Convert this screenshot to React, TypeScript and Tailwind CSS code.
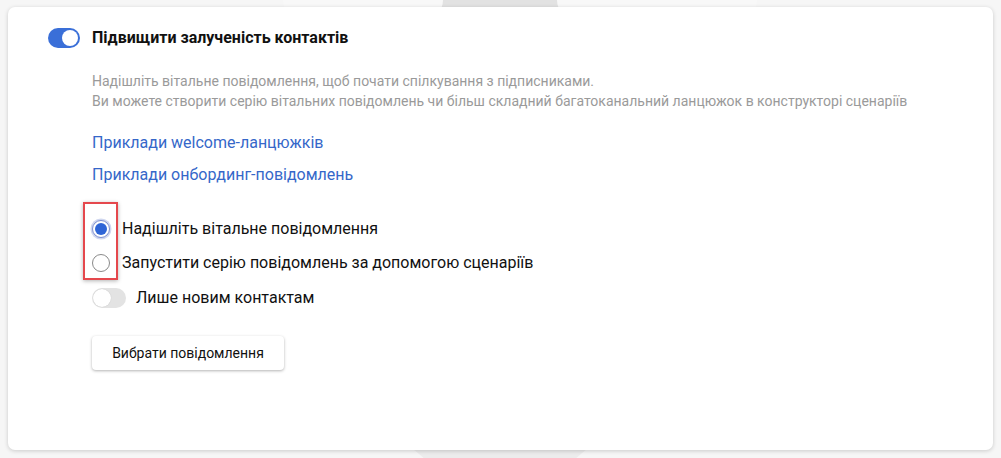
export default function App() {
  return (
    <div className="relative w-[1001px] h-[458px] overflow-hidden bg-[#f6f6f6] font-['Roboto',sans-serif]">
      {/* background decorations behind the card */}
      <div className="absolute left-[440px] top-0 w-[120px] h-[10px] bg-[#e2e2e2]" />
      <div className="absolute left-[283px] -top-[20px] w-[160px] h-[40px] rounded-[24px] bg-[#f8f8f8]" />
      <div className="absolute left-[557px] -top-[20px] w-[200px] h-[40px] rounded-[24px] bg-[#f8f8f8]" />
      <div className="absolute left-[412px] top-[448px] w-[176px] h-[12px] bg-[#ececec] [clip-path:polygon(0_0,100%_0,92%_100%,8%_100%)]" />

      <div className="relative mx-[8px] mt-[7px] h-[443px] rounded-[7px] bg-white shadow-[0_1px_4px_rgba(0,0,0,0.18)] pl-[40px] pt-[21px]">
        <div className="flex items-center gap-[12px]">
          <div className="relative w-[32px] h-[20px] rounded-full bg-[#3a6fd8]">
            <div className="absolute right-[2px] top-[2px] w-[16px] h-[16px] rounded-full bg-white" />
          </div>
          <span className="text-[16px] leading-[20px] font-bold text-[#111]">Підвищити залученість контактів</span>
        </div>

        <div className="pl-[44px]">
          <div className="mt-[23px] text-[14px] leading-[20px] text-[#9a9a9a]">
            <div>Надішліть вітальне повідомлення, щоб почати спілкування з підписниками.</div>
            <div>Ви можете створити серію вітальних повідомлень чи більш складний багатоканальний ланцюжок в конструкторі сценаріїв</div>
          </div>

          <div className="mt-[22px] flex flex-col gap-[12px] text-[16px] leading-[20px] text-[#3567c9]">
            <a>Приклади welcome-ланцюжків</a>
            <a>Приклади онбординг-повідомлень</a>
          </div>

          <div className="relative mt-[34px] flex flex-col gap-[14px]">
            <div className="absolute -left-[9px] -top-[17px] w-[35px] h-[78px] border-2 border-[#e5484d] shadow-[0_1px_4px_rgba(0,0,0,0.3)]" />
            <label className="flex items-center gap-[12px] text-[16px] leading-[20px] text-[#111]">
              <span className="flex items-center justify-center w-[18px] h-[18px] rounded-full border border-[#7d8fcf] bg-white shadow-[0_0_0_1.5px_rgba(120,140,210,0.35)]">
                <span className="w-[12px] h-[12px] rounded-full bg-[#2f65d6]" />
              </span>
              Надішліть вітальне повідомлення
            </label>
            <label className="flex items-center gap-[12px] text-[16px] leading-[20px] text-[#111]">
              <span className="w-[18px] h-[18px] rounded-full border border-[#8a8a8a] bg-white" />
              Запустити серію повідомлень за допомогою сценаріїв
            </label>
          </div>

          <div className="mt-[15px] flex items-center gap-[10px]">
            <div className="relative w-[34px] h-[20px] rounded-full bg-[#e3e3e3]">
              <div className="absolute left-[1px] top-[1px] w-[18px] h-[18px] rounded-full bg-white shadow-[0_0_1px_rgba(0,0,0,0.2)]" />
            </div>
            <span className="text-[16px] leading-[20px] text-[#111]">Лише новим контактам</span>
          </div>

          <button className="mt-[28px] w-[192px] h-[34px] rounded-[4px] bg-white text-[14px] text-[#111] shadow-[0_1px_3px_rgba(0,0,0,0.3)]">
            Вибрати повідомлення
          </button>
        </div>
      </div>
    </div>
  )
}
